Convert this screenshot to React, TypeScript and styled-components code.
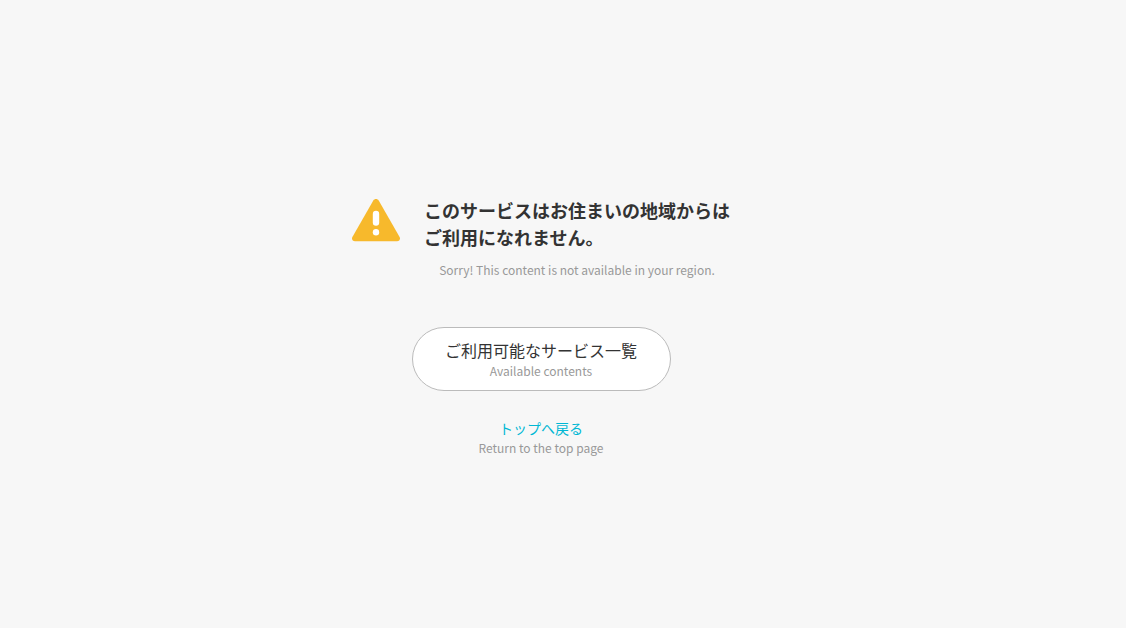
import React from "react";
import styled, { createGlobalStyle } from "styled-components";

const GlobalStyle = createGlobalStyle`
  * { box-sizing: border-box; }
  body {
    margin: 0;
    background: #f7f7f7;
    color: #333;
    font-family: "Noto Sans CJK JP", sans-serif;
  }
`;

const Page = styled.main`
  min-height: 100vh;
  display: flex;
  flex-direction: column;
  align-items: center;
  padding: 197px 44px 40px 0;
`;

const Notice = styled.section`
  display: flex;
  align-items: flex-start;
  gap: 24px;
`;

const WarningIcon = styled.svg`
  flex: none;
  width: 48px;
  height: 44px;
  margin-top: 1px;
`;

const Message = styled.div`
  text-align: center;
`;

const Title = styled.h1`
  margin: 0 0 10px;
  font-size: 18px;
  line-height: 27px;
  font-weight: 700;
  text-align: left;
`;

const Caption = styled.span`
  display: block;
  font-size: 12px;
  line-height: 18px;
  color: #999;
`;

const ServicesButton = styled.button`
  min-width: 259px;
  margin: 48px 0 0;
  padding: 10px 32px;
  border: 1px solid #bbb;
  border-radius: 32px;
  background: #fff;
  color: #333;
  font-family: inherit;
  font-size: 16px;
  line-height: 24px;
  text-align: center;
  cursor: pointer;
`;

const TopLink = styled.a`
  display: block;
  margin-top: 26px;
  color: #00b8d4;
  font-size: 14px;
  line-height: 22px;
  text-align: center;
  text-decoration: none;
`;

export default function App() {
  return (
    <>
      <GlobalStyle />
      <Page>
        <Notice>
          <WarningIcon viewBox="0 0 48 44" aria-hidden="true">
            <path
              fill="#f7b92c"
              d="M21.3 2.6C22.5.6 25.5.6 26.7 2.6L47.6 39C48.7 41.1 47.4 43.3 45 43.3H3C.6 43.3-.7 41.1.4 39Z"
            />
            <rect x="20.8" y="12.8" width="6.4" height="15" rx="3.2" fill="#fff" />
            <circle cx="24" cy="34.2" r="3.2" fill="#fff" />
          </WarningIcon>
          <Message>
            <Title>
              このサービスはお住まいの地域からは
              <br />
              ご利用になれません。
            </Title>
            <Caption lang="en">Sorry! This content is not available in your region.</Caption>
          </Message>
        </Notice>
        <ServicesButton type="button">
          ご利用可能なサービス一覧
          <Caption lang="en">Available contents</Caption>
        </ServicesButton>
        <TopLink href="#top">
          トップへ戻る
          <Caption lang="en">Return to the top page</Caption>
        </TopLink>
      </Page>
    </>
  );
}
